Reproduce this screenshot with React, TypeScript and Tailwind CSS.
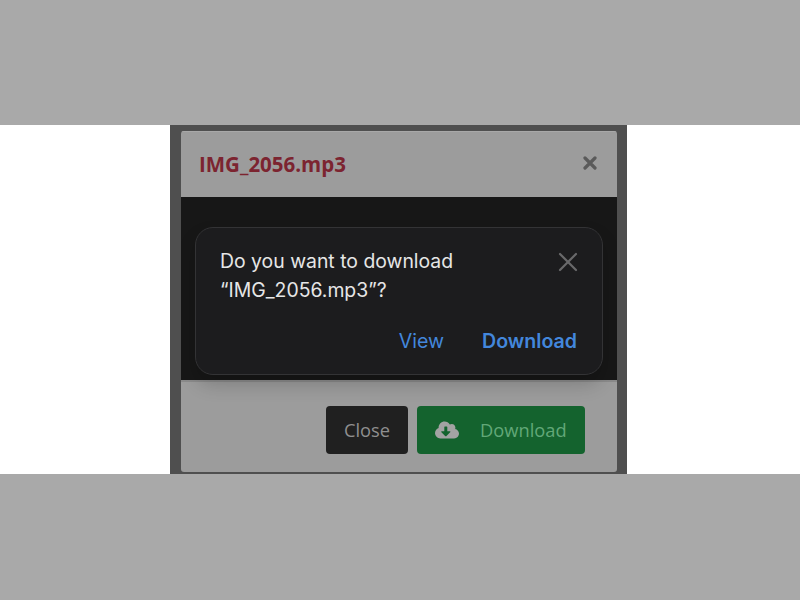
import { FaCloudDownloadAlt } from 'react-icons/fa';

export default function App() {
  return (
    <div className="flex h-[600px] w-[800px] flex-col overflow-hidden bg-white">
      <div className="h-[125px] bg-[#a9a9a9]" />

      {/* Photo of the phone */}
      <div className="flex h-[349px] justify-center bg-white">
        <div className="ml-[-3px] h-full w-[457px] bg-[#4f4f4f] pb-[2px] pl-[11px] pr-[10px] pt-[6px]">
          <div className="flex h-full flex-col overflow-hidden rounded-[3px] bg-[#9c9c9c]">
            {/* Header */}
            <div className="flex h-[66px] items-center justify-between border-t border-[#a8a8a8] pl-[18px] pr-[20px]">
              <span className="font-['Open_Sans',sans-serif] text-[20.5px] font-bold text-[#7c2430]">IMG_2056.mp3</span>
              <svg width="14" height="14" viewBox="0 0 14 14" className="mt-[-3px]">
                <path d="M2 2 L12 12 M12 2 L2 12" stroke="#5a5a5a" strokeWidth="3.2" strokeLinecap="round" />
              </svg>
            </div>

            {/* Body with the browser prompt */}
            <div className="h-[183px] bg-[#171717] px-[14px] pb-[5px] pt-[30px]">
              <div className="relative z-10 h-[148px] rounded-[18px] border border-[#333335] bg-[#1c1c1e] pl-[24px] pr-[25px] pt-[19px] font-['Inter',sans-serif] shadow-[0_10px_18px_rgba(0,0,0,0.18)]">
                <div className="flex justify-between">
                  <p className="text-[19.4px] leading-[29px] text-[#e6e6e6]">
                    Do you want to download
                    <br />
                    “IMG_2056.mp3”?
                  </p>
                  <svg width="20" height="20" viewBox="0 0 20 20" className="mr-[-1px] mt-[5px]">
                    <path d="M2 2 L18 18 M18 2 L2 18" stroke="#69696b" strokeWidth="2.2" strokeLinecap="round" />
                  </svg>
                </div>
                <div className="mt-[22px] flex justify-end gap-[38px] text-[19.6px] leading-[29px] text-[#4387dc]">
                  <span>View</span>
                  <span className="font-semibold">Download</span>
                </div>
              </div>
            </div>

            {/* Footer */}
            <div className="flex flex-1 justify-end gap-[9px] border-t-2 border-[#8a8a8a] pr-[32px] pt-[24px] font-['Open_Sans',sans-serif] text-[18.3px]">
              <div className="flex h-[48px] w-[82px] items-center justify-center rounded-[4px] bg-[#202020] text-[#8f8f8f]">Close</div>
              <div className="flex h-[48px] w-[168px] items-center rounded-[4px] bg-[#14632e] pl-[18px] text-[#62a878]">
                <FaCloudDownloadAlt className="text-[24px] text-[#a3a3a3]" />
                <span className="ml-[21px]">Download</span>
              </div>
            </div>
          </div>
        </div>
      </div>

      <div className="flex-1 bg-[#a9a9a9]" />
    </div>
  );
}
